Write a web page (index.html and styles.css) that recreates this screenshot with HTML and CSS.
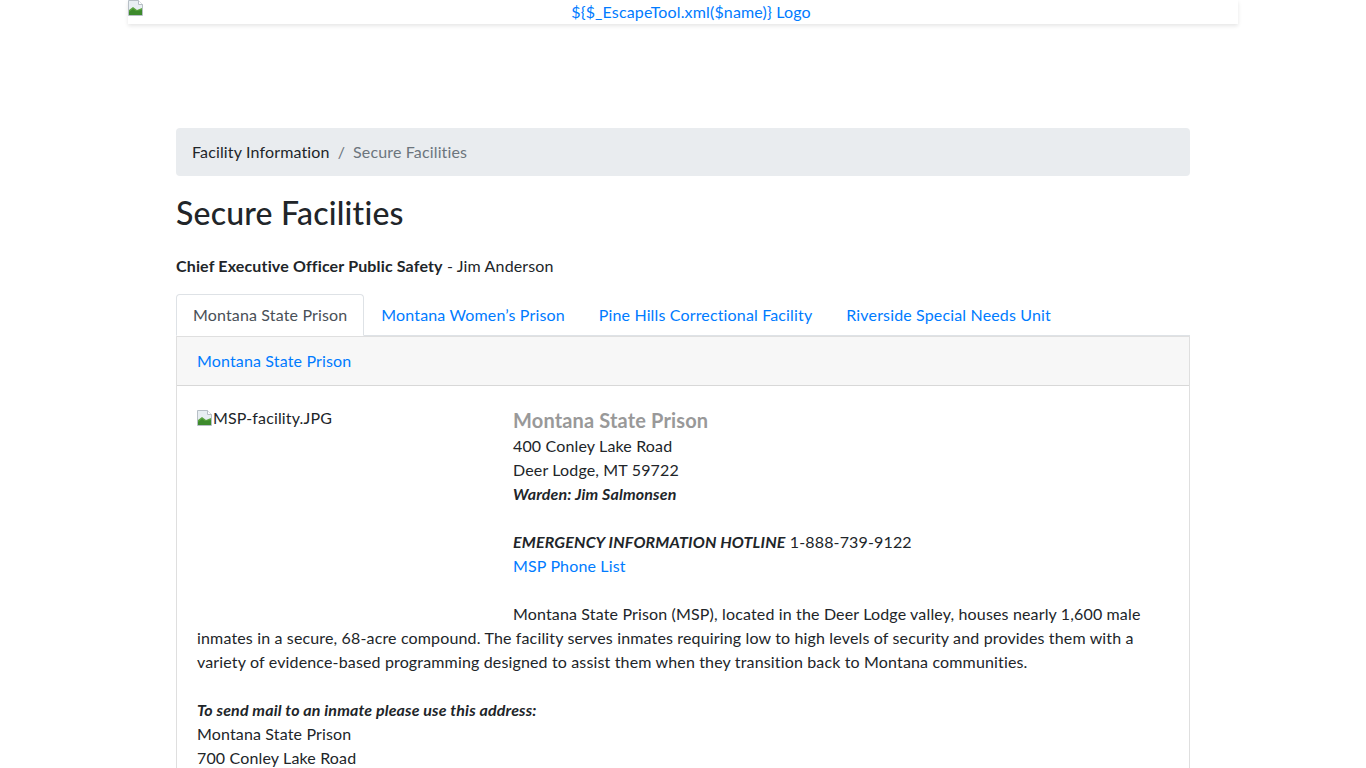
FILE: index.html
```html
<!DOCTYPE html>
<html lang="en">
<head>
    <meta charset="UTF-8">
    <meta name="viewport" content="width=device-width, initial-scale=1.0">
    <title>Secure Facilities</title>
    <link rel="stylesheet" href="styles.css">
</head>
<body>

<header class="site-header">
    <div class="header-inner">
        <span class="broken-img header-icon">
            <svg width="16" height="16" viewBox="0 0 16 16">
                <path d="M0.5 0.5h10l4 4v11h-14z" fill="#e8eef2" stroke="#b7bfc6"/>
                <path d="M10.5 0.5v4h4" fill="#ffffff" stroke="#b7bfc6"/>
                <path d="M1 15v-5l4-3 4 3 5-2v7z" fill="#5aa33f"/>
                <path d="M1 15v-3l4-3 3 2 6-1v5z" fill="#3d8a2c"/>
            </svg>
        </span>
        <a href="#" class="logo-alt">${$_EscapeTool.xml($name)} Logo</a>
    </div>
</header>

<main class="container">
    <nav class="breadcrumb">
        <a href="#" class="crumb">Facility Information</a>
        <span class="crumb-sep">/</span>
        <span class="crumb active">Secure Facilities</span>
    </nav>

    <h2 class="page-title">Secure Facilities</h2>

    <p class="lead-line"><strong>Chief Executive Officer Public Safety</strong> - Jim Anderson</p>

    <ul class="nav-tabs">
        <li><a href="#" class="tab active">Montana State Prison</a></li>
        <li><a href="#" class="tab">Montana Women’s Prison</a></li>
        <li><a href="#" class="tab">Pine Hills Correctional Facility</a></li>
        <li><a href="#" class="tab">Riverside Special Needs Unit</a></li>
    </ul>

    <div class="card">
        <div class="card-header">
            <a href="#">Montana State Prison</a>
        </div>
        <div class="card-body">
            <div class="facility-photo">
                <span class="broken-img">
                    <svg width="16" height="16" viewBox="0 0 16 16">
                        <path d="M0.5 0.5h10l4 4v11h-14z" fill="#e8eef2" stroke="#b7bfc6"/>
                        <path d="M10.5 0.5v4h4" fill="#ffffff" stroke="#b7bfc6"/>
                        <path d="M1 15v-5l4-3 4 3 5-2v7z" fill="#5aa33f"/>
                        <path d="M1 15v-3l4-3 3 2 6-1v5z" fill="#3d8a2c"/>
                    </svg>
                </span>MSP-facility.JPG
            </div>
            <h4 class="facility-name">Montana State Prison</h4>
            <p class="facility-info">
                400 Conley Lake Road<br>
                Deer Lodge, MT 59722<br>
                <strong><em>Warden: Jim Salmonsen</em></strong><br>
                <br>
                <strong><em>EMERGENCY INFORMATION HOTLINE</em></strong> 1-888-739-9122<br>
                <a href="#">MSP Phone List</a><br>
                <br>
                Montana State Prison (MSP), located in the Deer Lodge valley, houses nearly 1,600 male inmates in a secure, 68-acre compound. The facility serves inmates requiring low to high levels of security and provides them with a variety of evidence-based programming designed to assist them when they transition back to Montana communities.<br>
                <br>
                <strong><em>To send mail to an inmate please use this address:</em></strong><br>
                Montana State Prison<br>
                700 Conley Lake Road<br>
                Deer Lodge, MT 59722
            </p>
        </div>
    </div>
</main>

</body>
</html>
```

FILE: styles.css
```css
* {
    box-sizing: border-box;
}

body {
    margin: 0;
    font-family: 'Lato', 'Open Sans', sans-serif;
    font-size: 16px;
    line-height: 1.5;
    letter-spacing: 0.15px;
    color: #212529;
    background-color: #ffffff;
}

a {
    color: #007bff;
    text-decoration: none;
}

/* top logo strip */
.site-header {
    width: 1110px;
    margin: 0 auto;
    background-color: #ffffff;
    box-shadow: 0 2px 4px rgba(0, 0, 0, 0.1);
}

.header-inner {
    height: 24px;
    text-align: center;
}

.header-icon {
    float: left;
}

.logo-alt {
    font-size: 16px;
    line-height: 24px;
}

.broken-img {
    display: inline-block;
    width: 16px;
    height: 16px;
    vertical-align: -2px;
}

.broken-img svg {
    display: block;
}

.container {
    width: 1014px;
    margin: 104px auto 0;
}

/* breadcrumb */
.breadcrumb {
    display: flex;
    align-items: center;
    padding: 12px 16px;
    background-color: #e9ecef;
    border-radius: 4px;
    margin-bottom: 18px;
}

.crumb {
    color: #212529;
}

.crumb.active {
    color: #6c757d;
}

.crumb-sep {
    color: #6c757d;
    padding: 0 8px;
}

.page-title {
    margin: 0 0 22px;
    font-size: 32px;
    font-weight: 500;
    line-height: 1.2;
    letter-spacing: 0.2px;
}

.lead-line {
    margin: 0 0 16px;
}

.lead-line strong {
    font-weight: 700;
}

/* tabs */
.nav-tabs {
    display: flex;
    list-style: none;
    margin: 0;
    padding: 0;
    border-bottom: 1px solid #dee2e6;
}

.tab {
    display: block;
    padding: 8px 16px;
    border: 1px solid transparent;
    border-top-left-radius: 4px;
    border-top-right-radius: 4px;
    margin-bottom: -1px;
}

.tab.active {
    color: #495057;
    background-color: #ffffff;
    border-color: #dee2e6 #dee2e6 #ffffff;
}

/* facility card */
.card {
    border: 1px solid rgba(0, 0, 0, 0.125);
    border-radius: 0 0 4px 4px;
}

.card-header {
    padding: 12px 20px;
    background-color: rgba(0, 0, 0, 0.03);
    border-bottom: 1px solid rgba(0, 0, 0, 0.125);
}

.card-body {
    padding: 20px;
}

.card-body::after {
    content: "";
    display: block;
    clear: both;
}

.facility-photo {
    float: left;
    width: 316px;
    height: 210px;
}

.facility-name {
    margin: 0;
    font-size: 20px;
    line-height: 28px;
    font-weight: 700;
    color: #999999;
}

.facility-info {
    margin: 0;
}
```
